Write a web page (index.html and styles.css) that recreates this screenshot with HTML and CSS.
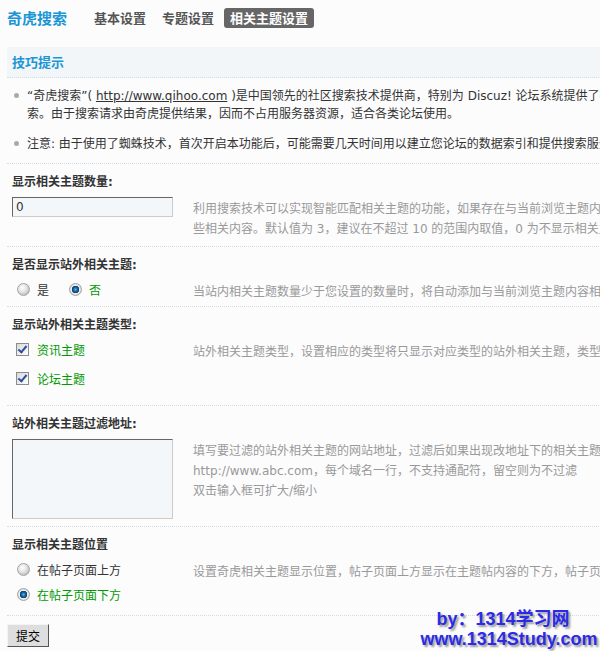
FILE: index.html
```html
<!DOCTYPE html>
<html lang="zh-CN">
<head>
  <meta charset="UTF-8" />
  <meta name="viewport" content="width=device-width, initial-scale=1.0"/>
  <title>奇虎搜索 - 相关主题设置</title>
  <link rel="stylesheet" href="styles.css">
</head>
<body>
  <div class="page">
    <div class="topbar">
      <h1 class="brand">奇虎搜索</h1>
      <ul class="tabs">
        <li><a href="#">基本设置</a></li>
        <li><a href="#">专题设置</a></li>
        <li class="current"><a href="#">相关主题设置</a></li>
      </ul>
    </div>

    <div class="tips">
      <h3 class="tips-title">技巧提示</h3>
      <ul class="tips-list">
        <li>“奇虎搜索”( <a href="#">http://www.qihoo.com</a> )是中国领先的社区搜索技术提供商，特别为 Discuz! 论坛系统提供了社区搜索的解决方案，让用户更方便地搜<br>索。由于搜索请求由奇虎提供结果，因而不占用服务器资源，适合各类论坛使用。</li>
        <li>注意: 由于使用了蜘蛛技术，首次开启本功能后，可能需要几天时间用以建立您论坛的数据索引和提供搜索服务。</li>
      </ul>
    </div>

    <form class="settings">
      <div class="setting">
        <h4 class="setting-label">显示相关主题数量:</h4>
        <div class="setting-body">
          <div class="control"><input type="text" class="txt" value="0"></div>
          <div class="tip">利用搜索技术可以实现智能匹配相关主题的功能，如果存在与当前浏览主题内容相关的主题，将在帖子底部显示这<br>些相关内容。默认值为 3，建议在不超过 10 的范围内取值，0 为不显示相关主题</div>
        </div>
      </div>

      <div class="setting setting-short">
        <h4 class="setting-label">是否显示站外相关主题:</h4>
        <div class="setting-body">
          <div class="control">
            <ul class="options inline">
              <li><input type="radio" class="radio" name="outside"><label>是</label></li>
              <li class="checked"><input type="radio" class="radio" name="outside" checked><label>否</label></li>
            </ul>
          </div>
          <div class="tip">当站内相关主题数量少于您设置的数量时，将自动添加与当前浏览主题内容相关的站外主题</div>
        </div>
      </div>

      <div class="setting">
        <h4 class="setting-label">显示站外相关主题类型:</h4>
        <div class="setting-body">
          <div class="control">
            <ul class="options checks">
              <li class="checked"><input type="checkbox" class="check" checked><label>资讯主题</label></li>
              <li class="checked"><input type="checkbox" class="check" checked><label>论坛主题</label></li>
            </ul>
          </div>
          <div class="tip">站外相关主题类型，设置相应的类型将只显示对应类型的站外相关主题，类型可以多选</div>
        </div>
      </div>

      <div class="setting">
        <h4 class="setting-label">站外相关主题过滤地址:</h4>
        <div class="setting-body">
          <div class="control"><textarea class="area"></textarea></div>
          <div class="tip">填写要过滤的站外相关主题的网站地址，过滤后如果出现改地址下的相关主题将不再显示，例如<br>http://www.abc.com，每个域名一行，不支持通配符，留空则为不过滤<br>双击输入框可扩大/缩小</div>
        </div>
      </div>

      <div class="setting">
        <h4 class="setting-label">显示相关主题位置</h4>
        <div class="setting-body">
          <div class="control">
            <ul class="options stack">
              <li><input type="radio" class="radio" name="position"><label>在帖子页面上方</label></li>
              <li class="checked"><input type="radio" class="radio" name="position" checked><label>在帖子页面下方</label></li>
            </ul>
          </div>
          <div class="tip">设置奇虎相关主题显示位置，帖子页面上方显示在主题帖内容的下方，帖子页面下方显示在快速回复框的上方</div>
        </div>
      </div>

      <div class="submit-row">
        <button type="button" class="btn">提交</button>
      </div>
    </form>
  </div>

  <div class="watermark">
    <div class="wm-by">by：1314学习网</div>
    <div>www.1314Study.com</div>
  </div>
</body>
</html>
```

FILE: styles.css
```css
html, body {
  margin: 0;
  overflow: hidden;
}

body {
  background-color: #fcfcfd;
  font-family: "DejaVu Sans", "Noto Sans CJK SC", sans-serif;
  font-size: 12px;
  color: #333;
}

.page {
  width: 1000px;
  padding-left: 7px;
}

/* top navigation */
.topbar {
  display: flex;
  align-items: center;
  height: 20px;
  padding-top: 8px;
  margin-bottom: 19px;
}

.brand {
  margin: 0 21px 0 0;
  font-family: "Noto Sans CJK SC", sans-serif;
  font-size: 15px;
  line-height: 20px;
  color: #1a96d4;
}

.tabs {
  display: flex;
  gap: 4px;
  list-style: none;
  margin: 0;
  padding: 0;
}

.tabs a {
  display: block;
  padding: 0 6px;
  line-height: 20px;
  font-family: "Noto Sans CJK SC", sans-serif;
  font-size: 13px;
  font-weight: bold;
  color: #555;
  text-decoration: none;
  border-radius: 3px;
}

.tabs .current a {
  background-color: #666;
  color: #fff;
}

/* tips box */
.tips-title {
  margin: 0;
  height: 30px;
  line-height: 30px;
  padding-left: 5px;
  background-color: #f2f6f9;
  color: #1a96d4;
  font-family: "Noto Sans CJK SC", sans-serif;
  font-size: 13px;
  border-bottom: 1px dotted #cfdde9;
}

.tips-list {
  list-style: none;
  margin: 0;
  padding: 9px 0 10px 20px;
  border-bottom: 1px dotted #cfdde9;
}

.tips-list li {
  position: relative;
  line-height: 18px;
  white-space: nowrap;
  margin-bottom: 12px;
}

.tips-list li:last-child {
  margin-bottom: 0;
}

.tips-list li::before {
  content: "";
  position: absolute;
  left: -13px;
  top: 6px;
  width: 5px;
  height: 5px;
  border-radius: 50%;
  background-color: #aaa;
}

.tips-list a {
  color: #333;
}

/* setting rows */
.setting {
  border-bottom: 1px dotted #cfdde9;
  padding: 8px 0 7px 5px;
}

.setting-short {
  padding-bottom: 4px;
}

.setting-label {
  margin: 0;
  font-size: 12px;
  line-height: 20px;
  font-weight: bold;
  color: #333;
}

.setting-body {
  display: flex;
  padding-top: 5px;
}

.control {
  width: 181px;
  flex: none;
}

.tip {
  margin-top: 2px;
  line-height: 20px;
  color: #999;
  white-space: nowrap;
}

.txt, .area {
  display: block;
  box-sizing: border-box;
  width: 161px;
  margin: 0;
  padding: 0 3px;
  border: 1px solid;
  border-color: #666 #ccc #ccc #666;
  background-color: #f4f7fa;
  font-family: "DejaVu Sans", sans-serif;
  font-size: 12px;
  color: #333;
}

.txt {
  height: 20px;
}

.area {
  height: 80px;
  resize: none;
}

.options {
  list-style: none;
  margin: 0;
  padding: 0;
}

.options li {
  display: flex;
  align-items: center;
  height: 18px;
}

.options.inline {
  display: flex;
}

.options.inline li {
  margin-right: 15px;
}

.options.checks li {
  margin-bottom: 11px;
}

.options.stack li {
  margin-bottom: 7px;
}

.options.stack li:last-child {
  margin-bottom: 5px;
}

.options .checked label {
  color: #090;
}

.radio {
  appearance: none;
  -webkit-appearance: none;
  flex: none;
  width: 13px;
  height: 13px;
  margin: 0 7px 0 5px;
  border-radius: 50%;
  border: 1px solid #a3a3a3;
  background: radial-gradient(circle at 40% 35%, #fff 0, #e4e4e4 4px, #c4c4c4 7px);
}

.radio:checked {
  background: radial-gradient(circle at 50% 50%, #5fb0e8 0, #1166b0 2px, #123a60 3.5px, #f0f0f0 4px, #c8c8c8 6.5px);
}

.check {
  appearance: none;
  -webkit-appearance: none;
  position: relative;
  flex: none;
  width: 13px;
  height: 13px;
  margin: 0 8px 0 4px;
  border: 1px solid #8c8c8c;
  background: linear-gradient(135deg, #d8d8d8, #fff);
}

.check:checked::after {
  content: "";
  position: absolute;
  left: 3px;
  top: 0;
  width: 3px;
  height: 7px;
  border: solid #2d4f9e;
  border-width: 0 2px 2px 0;
  transform: rotate(40deg);
}

/* submit */
.submit-row {
  padding-top: 8px;
}

.btn {
  height: 23px;
  margin: 0;
  padding: 0 8px;
  font-family: "Noto Sans CJK SC", sans-serif;
  font-size: 12px;
  color: #000;
  background-color: #dedede;
  border: 1px solid;
  border-color: #f4f4f4 #555 #555 #f4f4f4;
  cursor: pointer;
}

/* overlay stamp */
.watermark {
  position: absolute;
  left: 418px;
  top: 609px;
  width: 182px;
  text-align: center;
  font-family: "Liberation Sans", "Noto Sans CJK SC", sans-serif;
  font-size: 18px;
  font-weight: bold;
  line-height: 20px;
  color: #2b2be6;
  text-shadow: 2px 2px 2px #999;
}

.wm-by {
  padding-right: 12px;
}
```
